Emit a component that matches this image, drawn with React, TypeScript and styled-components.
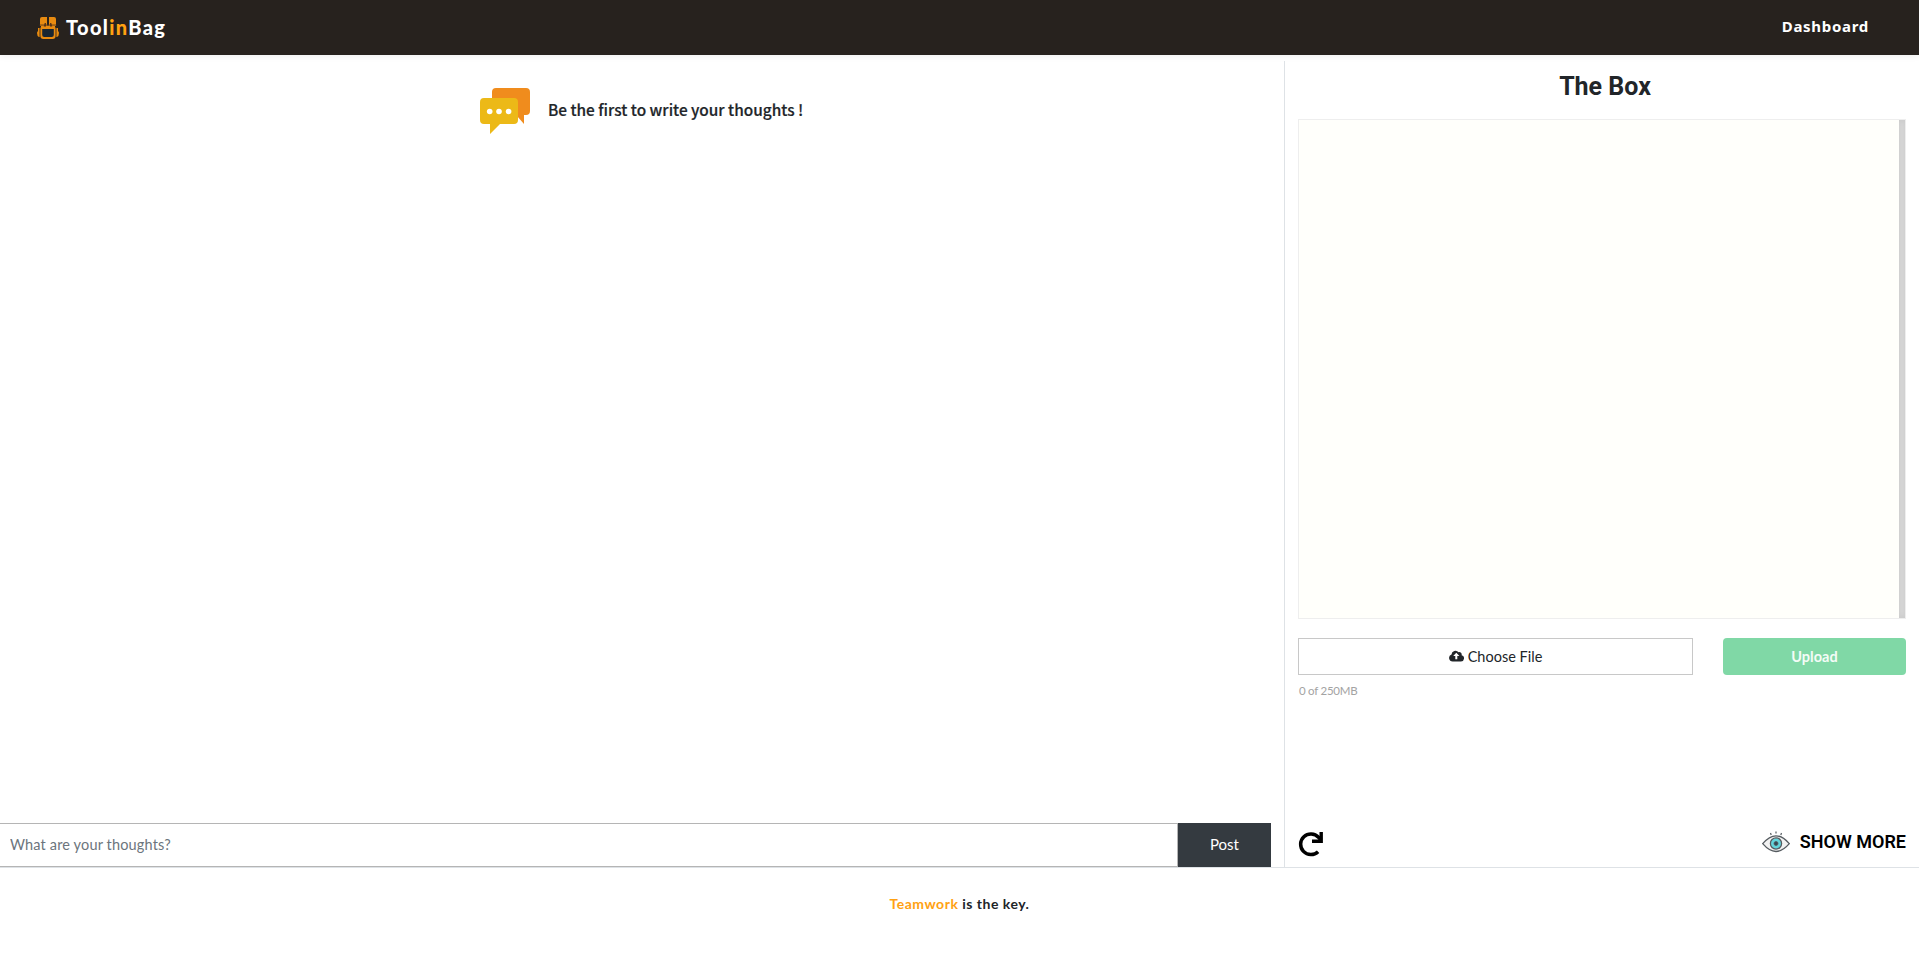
import React from "react";
import styled, { createGlobalStyle } from "styled-components";

const GlobalStyle = createGlobalStyle`
  *, *::before, *::after { box-sizing: border-box; }
  body { margin: 0; background: #fff; color: #212529; font-family: Lato, "Liberation Sans", sans-serif; }
  button, input { font: inherit; margin: 0; }
`;

const Page = styled.div`
  display: flex;
  flex-direction: column;
  height: 953px;
  overflow: hidden;
`;

const Header = styled.header`
  display: flex;
  align-items: center;
  justify-content: space-between;
  flex: none;
  height: 55px;
  padding: 0 50px 0 37px;
  background: #27221e;
  box-shadow: 0 2px 6px rgba(0, 0, 0, 0.06);
`;

const Brand = styled.a`
  display: flex;
  align-items: center;
  gap: 7px;
  color: #fff;
`;

const BrandName = styled.span`
  font: 900 20px/24px Lato, sans-serif;
  letter-spacing: 1.35px;
  margin-top: -2px;
`;

const Accent = styled.span`
  color: #ffa112;
`;

const NavLink = styled.a`
  color: #fff;
  font: 700 15px/22px "Noto Sans", sans-serif;
  letter-spacing: 0.7px;
  margin-top: -4px;
`;

const Main = styled.main`
  display: flex;
  flex: none;
  height: 812px;
  padding-top: 6px;
`;

const Thoughts = styled.section`
  display: flex;
  flex-direction: column;
  justify-content: space-between;
  width: 1284px;
  padding: 27px 13px 0 0;
`;

const EmptyState = styled.div`
  display: flex;
  align-items: center;
  gap: 17px;
  padding-left: 480px;
`;

const EmptyText = styled.p`
  margin: -6px 0 0;
  font: 500 15.4px/24px "Noto Sans CJK SC", sans-serif;
  -webkit-text-stroke: 0.2px currentColor;
  white-space: nowrap;
`;

const PostForm = styled.form`
  display: flex;
  height: 44px;
`;

const ThoughtInput = styled.input`
  flex: 1;
  min-width: 0;
  padding: 0 10px 1px;
  border: 1px solid #b5b5b5;
  border-left: 0;
  border-radius: 0;
  background: #fff;
  font-size: 14.5px;
  letter-spacing: 0.15px;
  &::placeholder { color: #6c757d; opacity: 1; }
`;

const PostButton = styled.button`
  width: 93px;
  padding-bottom: 3px;
  border: 0;
  background: #343a40;
  color: #fff;
  font-size: 15px;
`;

const BoxPanel = styled.aside`
  display: flex;
  flex-direction: column;
  flex: 1;
  border-left: 1px solid #dee2e6;
  padding: 11px 13px 0 13px;
`;

const BoxTitle = styled.h1`
  margin: 0;
  padding-left: 6px;
  text-align: center;
  font: 700 25px/29px Roboto, sans-serif;
`;

const FileList = styled.div`
  display: flex;
  justify-content: flex-end;
  height: 500px;
  margin-top: 18px;
  border: 1px solid #eeeeee;
  background: #fffffb;
`;

const ScrollTrack = styled.div`
  width: 6px;
  background: #dcdcdc;
  box-shadow: inset 0 0 6px rgba(0, 0, 0, 0.1);
`;

const UploadRow = styled.div`
  display: flex;
  justify-content: space-between;
  height: 37px;
  margin-top: 19px;
`;

const ChooseFile = styled.label`
  display: flex;
  align-items: center;
  justify-content: center;
  gap: 4px;
  width: 395px;
  padding-bottom: 1px;
  border: 1px solid #c8c8c8;
  font-size: 14.5px;
`;

const UploadButton = styled.button`
  width: 183px;
  padding-bottom: 2px;
  border: 0;
  border-radius: 4px;
  background: #80d8a6;
  color: #f4fcf7;
  font-size: 14.5px;
  font-weight: 700;
`;

const Quota = styled.span`
  margin: 8px 0 0 1px;
  color: #a3a3a3;
  font-size: 11.5px;
  letter-spacing: -0.25px;
  line-height: 15px;
`;

const PanelFooter = styled.div`
  display: flex;
  align-items: center;
  justify-content: space-between;
  margin-top: auto;
  height: 46px;
`;

const ShowMore = styled.button`
  display: flex;
  align-items: center;
  gap: 10px;
  margin-top: -4px;
  padding: 0;
  border: 0;
  background: none;
  color: #000;
  font: 600 18px/24px Roboto, sans-serif;
`;

const Footer = styled.footer`
  flex: 1;
  border-top: 1px solid #dee2e6;
  padding-top: 26px;
  text-align: center;
  font: 700 14px/20px Lato, sans-serif;
  letter-spacing: 0.5px;
`;

const BagIcon = () => (
  <svg width="22" height="24" viewBox="0 0 22 24" fill="#e88b10">
    <path d="M5 1h5v9H3V3q0-2 2-2zM12 1h5q2 0 2 2v7h-7z" />
    <path d="M4 9.5h14V13H4zM1 12h1.6v9H2q-2-1-2-4 0-1 1-2zM19.4 12H21v3q1 1 1 2 0 3-2 4h-.6z" />
    <path d="M4 13h14v7q0 2-3 2H7q-3 0-3-2z" fill="#182632" />
    <path d="M3.4 11.5H5.2v7.5q0 2 2 2h7.6q2 0 2-2v-7.5h1.8V20q0 3-3 3H6.4q-3 0-3-3z" />
    <path d="M7.7 7h1.3v3.6H6.7zM13 7h1.3l1 3.6H13z" fill="#59371a" />
    <path d="M2.5 8.6h17v.9h-17z" fill="#59371a" />
  </svg>
);

const ChatIcon = () => (
  <svg width="51" height="47" viewBox="0 0 51 47">
    <path d="M16 0h30q4 0 4 4v19q0 4-4 4h-2v9l-7-8H16q-4 0-4-4V4q0-4 4-4z" fill="#f08c1d" />
    <path d="M4 10h30q4 0 4 4v18q0 4-4 4H20L10 46V36H4q-4 0-4-4V14q0-4 4-4z" fill="#ecb917" />
    <g fill="#fff"><circle cx="9.7" cy="23.5" r="2.8" /><circle cx="19" cy="23.5" r="2.8" /><circle cx="28.6" cy="23.5" r="2.8" /></g>
  </svg>
);

const CloudUploadIcon = () => (
  <svg width="15" height="12" viewBox="0 0 15 12">
    <path d="M3.7 11.5a3.6 3.6 0 0 1-1.2-7A4 4 0 0 1 9.6 2.2a2.4 2.4 0 0 1 3 3A3.2 3.2 0 0 1 12 11.5z" fill="#212529" />
    <path d="M7.3 2.8 10.4 6H8.3v3.3h-2V6H4.2z" fill="#fff" />
  </svg>
);

const RefreshIcon = () => (
  <svg width="26" height="26" viewBox="0 0 26 26" fill="none" stroke="#000" strokeWidth="3.5">
    <path d="M20.1 20.7A10.3 10.3 0 1 1 20.5 6.3L23 9" />
    <path d="M23.2 1v9.2H14" strokeWidth="3.4" />
  </svg>
);

const EyeIcon = () => (
  <svg width="28" height="22" viewBox="0 0 28 22" fill="none" stroke="#555b60">
    <path d="M0.7 12.7Q14-3 27.3 12.7Q14 28.3 0.7 12.7z" fill="#f2f2f2" strokeWidth="1.3" />
    <circle cx="14" cy="12.5" r="5.6" fill="#63d5dc" strokeWidth="1.3" />
    <circle cx="14" cy="12.5" r="2" fill="#334a55" strokeWidth="0.8" />
    <path d="M14 0.5v2M8.5 2l.7 2M19.5 2l-.7 2" strokeWidth="1.2" />
  </svg>
);

export default function App() {
  return (
    <>
      <GlobalStyle />
      <Page>
        <Header>
          <Brand><BagIcon /><BrandName>Tool<Accent>in</Accent>Bag</BrandName></Brand>
          <NavLink>Dashboard</NavLink>
        </Header>
        <Main>
          <Thoughts>
            <EmptyState><ChatIcon /><EmptyText>Be the first to write your thoughts !</EmptyText></EmptyState>
            <PostForm>
              <ThoughtInput placeholder="What are your thoughts?" />
              <PostButton type="button">Post</PostButton>
            </PostForm>
          </Thoughts>
          <BoxPanel>
            <BoxTitle>The Box</BoxTitle>
            <FileList><ScrollTrack /></FileList>
            <UploadRow>
              <ChooseFile><CloudUploadIcon />Choose File</ChooseFile>
              <UploadButton>Upload</UploadButton>
            </UploadRow>
            <Quota>0 of 250MB</Quota>
            <PanelFooter>
              <RefreshIcon />
              <ShowMore><EyeIcon />SHOW MORE</ShowMore>
            </PanelFooter>
          </BoxPanel>
        </Main>
        <Footer><Accent>Teamwork</Accent> is the key.</Footer>
      </Page>
    </>
  );
}
